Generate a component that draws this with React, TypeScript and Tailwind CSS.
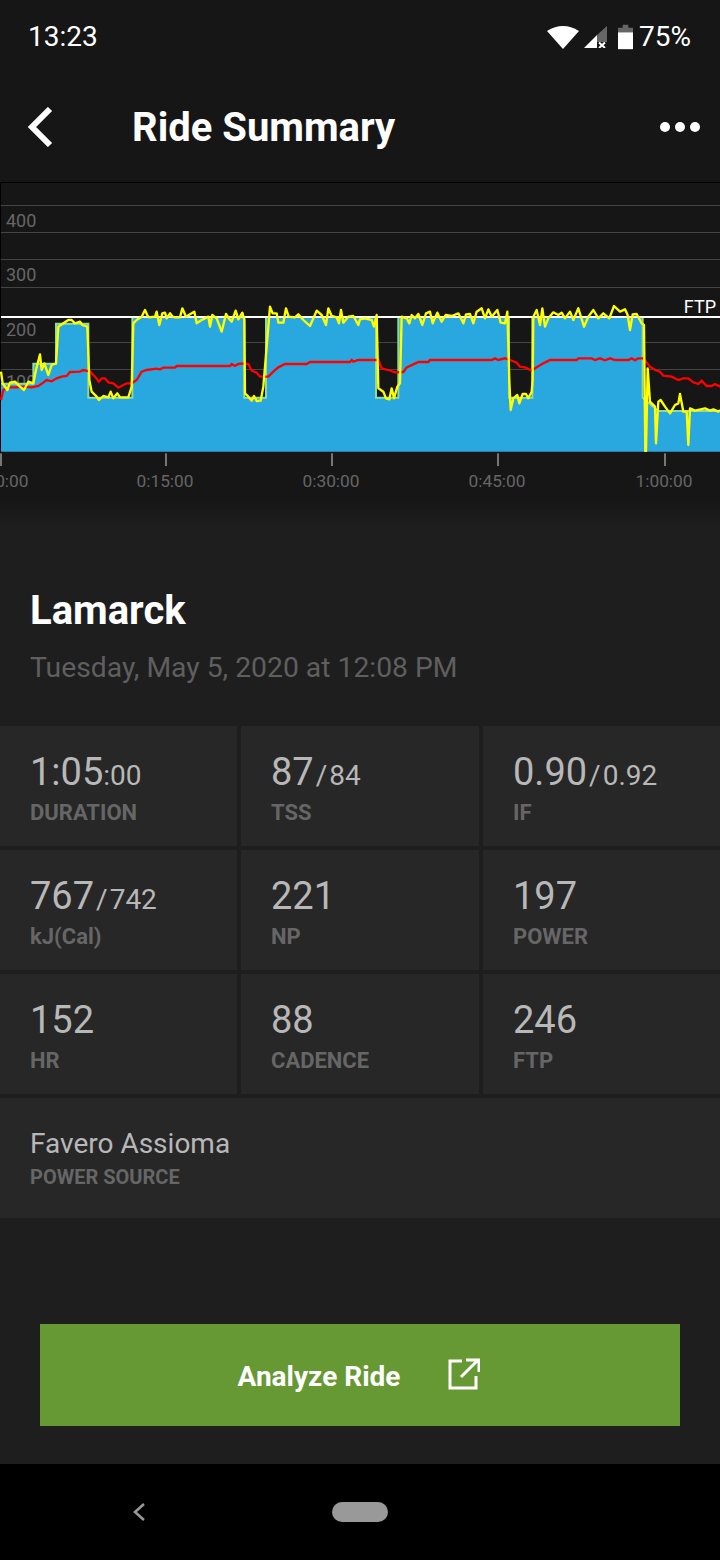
const yellow = "3,575 8,610 22,630 30,608 45,605 60,620 72,630 85,605 100,610 108,570 120,523 125,570 133,550 145,585 155,555 168,550 175,440 190,430 205,420 215,420 225,430 240,425 247,435 262,440 268,600 275,635 290,650 297,660 310,648 325,652 332,635 340,655 352,640 360,652 385,652 395,620 400,430 410,420 425,410 435,390 445,412 465,410 470,395 478,435 487,400 495,398 500,415 510,400 518,410 525,412 540,412 547,385 558,410 575,400 583,395 590,430 605,420 625,410 630,440 637,405 650,415 665,455 678,402 690,420 695,425 707,392 715,418 727,398 733,420 735,640 745,650 755,662 762,648 770,663 782,662 790,620 800,500 810,380 818,400 830,400 835,428 850,428 858,385 866,410 885,412 895,403 910,420 930,438 950,392 965,405 978,435 985,385 995,408 1010,412 1017,430 1023,390 1030,428 1045,410 1060,408 1075,435 1080,418 1095,415 1115,420 1122,440 1130,405 1135,625 1150,635 1158,655 1168,658 1175,625 1182,655 1192,620 1200,610 1205,410 1220,415 1228,430 1235,405 1245,415 1255,402 1267,435 1278,400 1290,395 1298,430 1312,398 1325,425 1337,405 1355,408 1375,400 1390,430 1398,403 1410,402 1420,430 1430,395 1445,385 1455,415 1465,388 1475,410 1492,390 1502,428 1515,430 1522,395 1528,600 1532,690 1540,655 1552,645 1558,670 1568,642 1578,642 1585,655 1595,635 1598,600 1600,410 1610,390 1620,435 1627,385 1635,440 1645,415 1660,397 1675,405 1685,398 1695,415 1710,395 1720,420 1735,385 1752,440 1765,410 1780,390 1795,415 1810,400 1828,415 1842,378 1860,395 1875,388 1883,405 1890,450 1898,403 1910,402 1925,430 1932,435 1936,815 1938,815 1943,565 1950,665 1965,680 1968,790 1975,665 1982,660 1995,680 2010,700 2025,675 2035,670 2040,642 2050,695 2060,695 2065,795 2070,685 2085,692 2115,685 2130,692 2140,688 2155,695 2160,690";

const red = "3,660 10,630 25,622 50,622 70,620 95,622 115,618 130,608 140,600 155,604 170,595 185,590 200,588 210,576 240,575 250,570 270,575 285,590 297,605 305,595 315,595 325,607 340,610 355,623 370,615 380,610 395,610 410,600 425,575 440,570 470,566 480,568 490,563 525,563 530,558 690,558 695,552 705,558 715,552 735,550 745,552 755,572 770,578 780,590 805,590 820,575 835,562 855,552 920,552 930,546 1050,546 1055,540 1060,545 1075,540 1135,540 1145,565 1165,570 1185,577 1210,576 1220,562 1240,553 1255,546 1285,546 1290,540 1475,540 1485,535 1495,540 1515,535 1530,540 1550,548 1560,560 1575,562 1595,572 1610,562 1630,550 1650,540 1730,540 1735,535 1775,535 1785,540 1800,535 1815,541 1830,535 1845,540 1885,540 1895,535 1905,541 1915,535 1930,535 1950,560 1965,570 1980,575 1990,587 2015,590 2035,600 2050,595 2065,595 2080,607 2095,612 2105,602 2120,618 2135,618 2145,612 2160,620";

const steps = "3,611 100,611 100,551 168,551 168,431 265,431 265,653 397,653 397,411 733,411 733,653 798,653 798,411 1128,411 1128,653 1195,653 1195,411 1527,411 1527,653 1597,653 1597,411 1928,411 1928,653 1975,693 2160,693";

// grid lines sit on whole pixels (3 units = 1px)
const grid = [75, 156, 237, 321, 486, 567];
const yLabels = [["400", 140], ["300", 303], ["200", 468], ["100", 625]];
const xLabels = [["0:00:00", 0], ["0:15:00", 495], ["0:30:00", 993], ["0:45:00", 1491], ["1:00:00", 1992]];

function StatusBar() {
  return (
    <div className="flex h-[72px] items-center justify-between pl-[28px] pr-[29px] pt-[1px]">
      <span className="text-[28px] text-white">13:23</span>
      <div className="flex items-center">
        <svg width="32" height="24" viewBox="0 0 32 24" className="mr-[5px]">
          <path d="M0 6 Q16 -4 32 6 L16 24 Z" fill="#fff" />
        </svg>
        <svg width="23" height="22" viewBox="0 0 23 22" className="mr-[11px]">
          <path d="M13 9 L23 0 V16 H13 Z" fill="#666" />
          <path d="M0 22 L13 9 V22 Z" fill="#fff" />
          <path d="M15 16.5 L21 22 M21 16.5 L15 22" stroke="#fff" strokeWidth="2" />
        </svg>
        <svg width="15" height="26" viewBox="0 0 16 26" className="mr-[6px]">
          <path d="M5 0 H11 V3 H16 V8 H0 V3 H5 Z" fill="#666" />
          <rect x="0" y="8" width="16" height="18" fill="#fff" />
        </svg>
        <span className="text-[28px] text-white">75%</span>
      </div>
    </div>
  );
}

function Chart() {
  return (
    <svg width="720" height="320" viewBox="0 0 2160 960" className="block font-['Roboto',sans-serif]">
      <rect x="0" y="6" width="2160" height="3" fill="#000" />
      <rect x="0" y="6" width="3" height="810" fill="#000" />
      {grid.map((y) => (
        <rect key={y} x="3" y={y} width="2157" height="3" fill="#444" />
      ))}
      {yLabels.map(([t, y]) => (
        <text key={t} x="18" y={y} fontSize="54" fill="#666">
          {t}
        </text>
      ))}
      <polygon points={`3,815 ${steps} 2160,815`} fill="#29a8e0" />
      <polyline points={steps} fill="none" stroke="#8fdc9a" strokeWidth="6" />
      <rect x="3" y="408" width="2157" height="6" fill="#fff" />
      <polyline points={red} fill="none" stroke="#ff0000" strokeWidth="7" />
      <polyline points={yellow} fill="none" stroke="#ffff00" strokeWidth="7" strokeLinejoin="round" />
      <rect x="0" y="816" width="2160" height="3" fill="#111" />
      {xLabels.map(([t, x]) => (
        <g key={t}>
          <rect x={t === "0:00:00" ? 0 : x} y="820" width="6" height="38" fill="#777" />
          <text x={x} y="920" fontSize="52" fill="#666" textAnchor="middle">
            {t}
          </text>
        </g>
      ))}
      <text x="2148" y="398" fontSize="54" fill="#fff" textAnchor="end">
        FTP
      </text>
    </svg>
  );
}

function Stat({ value, sub, slash, label }: { value: string; sub?: string; slash?: boolean; label: string }) {
  return (
    <div className="h-[120px] bg-[#272727] pl-[30px] pt-[21px]">
      <div className="flex h-[50px] items-baseline text-[#b8b8b8]">
        <span className="text-[38px] leading-[50px]">{value}</span>
        {slash && <span className="ml-[2px] text-[28px] leading-[50px]">/</span>}
        {sub && <span className={`text-[28px] leading-[50px] ${slash ? "ml-[2px]" : ""}`}>{sub}</span>}
      </div>
      <div className="mt-[3px] text-[22px] font-bold leading-[26px] text-[#666]">{label}</div>
    </div>
  );
}

export default function App() {
  return (
    <div className="flex h-[1560px] w-[720px] flex-col overflow-hidden bg-[#1e1e1e] font-['Roboto',sans-serif]">
      <div className="bg-[#161616]">
        <StatusBar />
        <div className="flex h-[108px] items-center justify-between pl-[27px] pr-[20px] pt-[2px]">
          <div className="flex items-center">
            <svg width="26" height="40" viewBox="0 0 26 40" className="mr-[79px]">
              <path d="M23 2 L5 20 L23 38" fill="none" stroke="#fff" strokeWidth="6" />
            </svg>
            <span className="mt-[2px] text-[40px] font-bold text-white">Ride Summary</span>
          </div>
          <div className="flex gap-[5px]">
            <div className="size-[10px] rounded-full bg-white" />
            <div className="size-[10px] rounded-full bg-white" />
            <div className="size-[10px] rounded-full bg-white" />
          </div>
        </div>
        <Chart />
      </div>

      <div className="h-[26px] bg-linear-to-b from-[#161616] to-[#1e1e1e]" />

      <div className="pl-[30px] pt-[60px]">
        <div className="text-[40px] font-bold leading-[50px] text-white">Lamarck</div>
        <div className="mt-[16px] text-[28.3px] leading-[32px] text-[#5f5f5f]">Tuesday, May 5, 2020 at 12:08 PM</div>
      </div>

      <div className="mt-[42px] grid grid-cols-[237px_238px_237px] gap-x-[4px] gap-y-[4px]">
        <Stat value="1:05" sub=":00" label="DURATION" />
        <Stat value="87" slash sub="84" label="TSS" />
        <Stat value="0.90" slash sub="0.92" label="IF" />
        <Stat value="767" slash sub="742" label="kJ(Cal)" />
        <Stat value="221" label="NP" />
        <Stat value="197" label="POWER" />
        <Stat value="152" label="HR" />
        <Stat value="88" label="CADENCE" />
        <Stat value="246" label="FTP" />
        <div className="col-span-3 h-[120px] bg-[#272727] pl-[30px] pt-[28px]">
          <div className="text-[28px] leading-[36px] text-[#b8b8b8]">Favero Assioma</div>
          <div className="mt-[2px] text-[20px] font-bold leading-[26px] text-[#666]">POWER SOURCE</div>
        </div>
      </div>

      <button className="mx-[40px] mt-[106px] flex h-[102px] items-center justify-center bg-[#669933] pr-[2px] text-white">
        <span className="pt-[4px] text-[28px] font-bold">Analyze Ride</span>
        <svg width="32" height="32" viewBox="0 0 32 32" className="mb-[2px] ml-[48px]">
          <path d="M14 3 H2 V30 H28 V18" fill="none" stroke="#fff" strokeWidth="3" />
          <path d="M13 19 L30 2 M18 2 H31 V14" fill="none" stroke="#fff" strokeWidth="3" />
        </svg>
      </button>

      <div className="mt-[38px] flex h-[96px] items-center bg-black">
        <svg width="14" height="20" viewBox="0 0 14 20" className="ml-[132px]">
          <path d="M12 2 L3 10 L12 18" fill="none" stroke="#999" strokeWidth="2.5" />
        </svg>
        <div className="ml-[186px] h-[20px] w-[56px] rounded-full bg-[#999]" />
      </div>
    </div>
  );
}
